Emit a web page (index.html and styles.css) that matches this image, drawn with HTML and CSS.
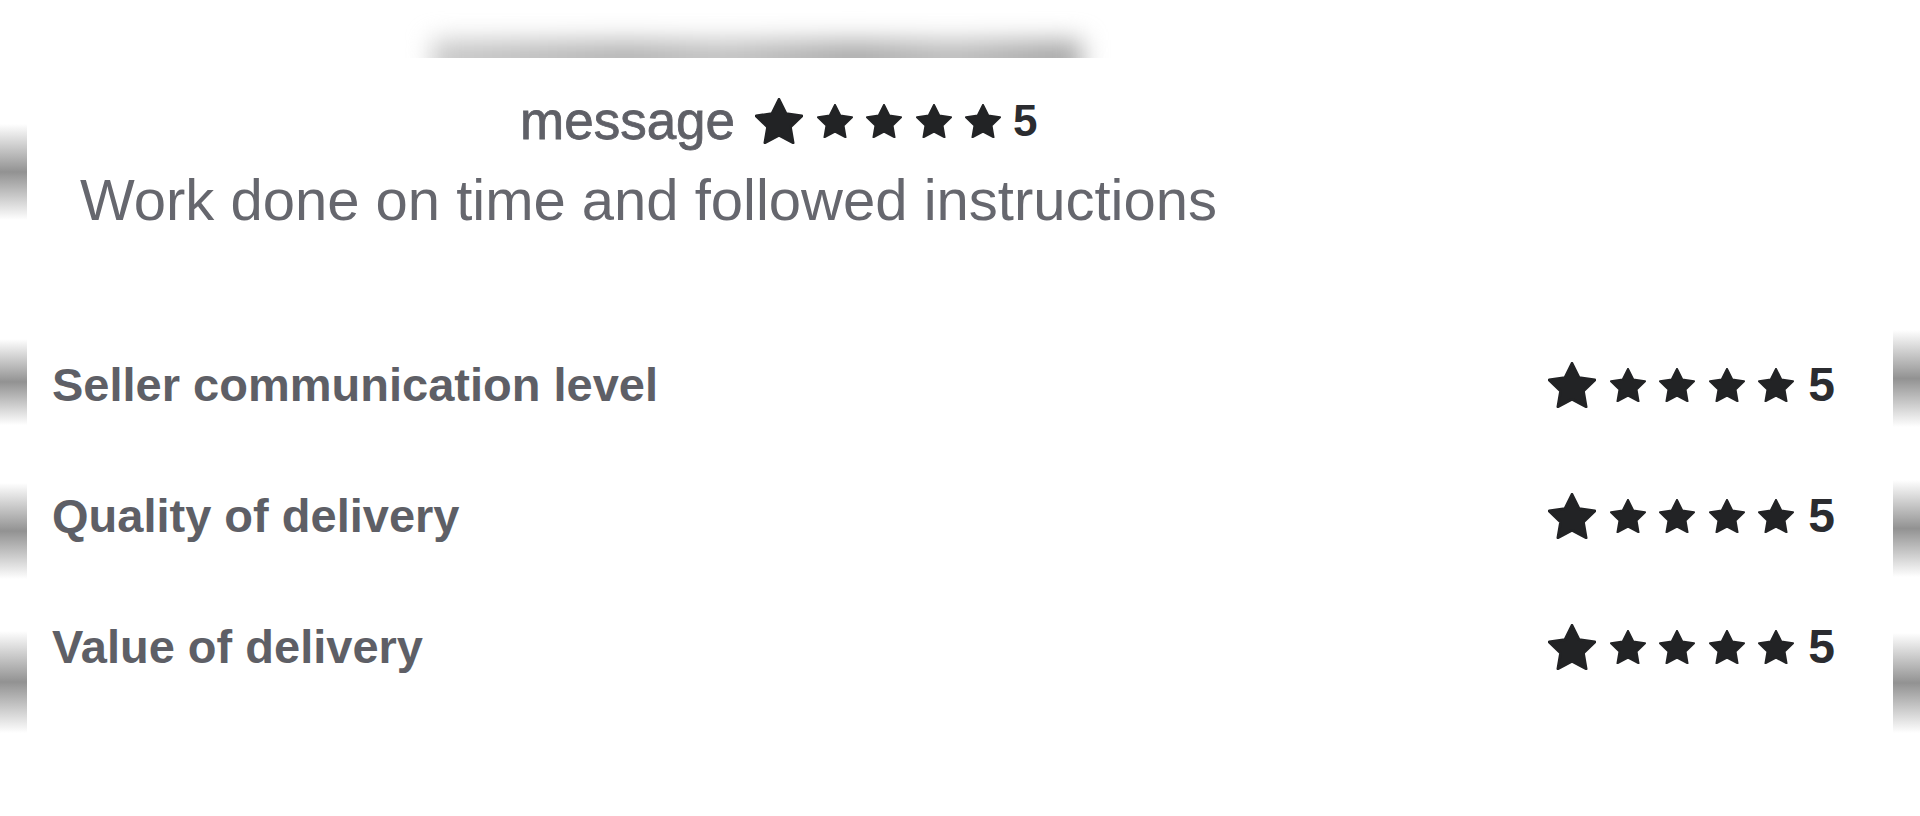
FILE: index.html
```html
<!DOCTYPE html>
<html lang="en">
<head>
  <meta charset="UTF-8" />
  <meta name="viewport" content="width=device-width, initial-scale=1.0"/>
  <title>Review</title>
  <link rel="stylesheet" href="styles.css">
</head>
<body>

  <svg class="sprite" aria-hidden="true">
    <symbol id="star" viewBox="1.5 1.5 21 20">
      <path d="M12 2l3.09 6.26L22 9.27l-5 4.87 1.18 6.88L12 17.77l-6.18 3.25L7 14.14 2 9.27l6.91-1.01L12 2z"/>
    </symbol>
  </svg>

  <div class="frame">
    <div class="gutter">
      <span class="edge e1"></span>
      <span class="edge e2"></span>
      <span class="edge e3"></span>
      <span class="edge e4"></span>
    </div>

    <div class="main">
      <div class="top-fade"><span class="fade-band"></span></div>

      <div class="review-head">
        <span class="msg">message</span>
        <div class="stars">
          <svg class="star big"><use href="#star"/></svg>
          <svg class="star"><use href="#star"/></svg>
          <svg class="star"><use href="#star"/></svg>
          <svg class="star"><use href="#star"/></svg>
          <svg class="star"><use href="#star"/></svg>
        </div>
        <span class="score small">5</span>
      </div>

      <p class="review-text">Work done on time and followed instructions</p>

      <div class="breakdown">
        <div class="row">
          <span class="label">Seller communication level</span>
          <div class="rating">
            <div class="stars">
              <svg class="star big"><use href="#star"/></svg>
              <svg class="star"><use href="#star"/></svg>
              <svg class="star"><use href="#star"/></svg>
              <svg class="star"><use href="#star"/></svg>
              <svg class="star"><use href="#star"/></svg>
            </div>
            <span class="score">5</span>
          </div>
        </div>
        <div class="row">
          <span class="label">Quality of delivery</span>
          <div class="rating">
            <div class="stars">
              <svg class="star big"><use href="#star"/></svg>
              <svg class="star"><use href="#star"/></svg>
              <svg class="star"><use href="#star"/></svg>
              <svg class="star"><use href="#star"/></svg>
              <svg class="star"><use href="#star"/></svg>
            </div>
            <span class="score">5</span>
          </div>
        </div>
        <div class="row">
          <span class="label">Value of delivery</span>
          <div class="rating">
            <div class="stars">
              <svg class="star big"><use href="#star"/></svg>
              <svg class="star"><use href="#star"/></svg>
              <svg class="star"><use href="#star"/></svg>
              <svg class="star"><use href="#star"/></svg>
              <svg class="star"><use href="#star"/></svg>
            </div>
            <span class="score">5</span>
          </div>
        </div>
      </div>
    </div>

    <div class="gutter">
      <span class="edge r1"></span>
      <span class="edge r2"></span>
      <span class="edge r3"></span>
    </div>
  </div>

</body>
</html>
```

FILE: styles.css
```css
body {
  margin: 0;
  background: #fff;
  font-family: "Liberation Sans", Arial, sans-serif;
  overflow: hidden;
}

.sprite {
  display: none;
}

.frame {
  display: flex;
  height: 816px;
}

/* blurry bits of the page behind, cut off by the card */
.gutter {
  width: 27px;
  display: flex;
  flex-direction: column;
}

.edge {
  display: block;
  background: linear-gradient(to bottom, rgba(140,140,140,0) 0%, #929292 50%, rgba(140,140,140,0) 100%);
}

.e1 { margin-top: 124px; height: 96px; }
.e2 { margin-top: 119px; height: 86px; }
.e3 { margin-top: 58px; height: 96px; }
.e4 { margin-top: 52px; height: 102px; }

.r1 { margin-top: 330px; height: 97px; }
.r2 { margin-top: 53px; height: 97px; }
.r3 { margin-top: 56px; height: 100px; }

.main {
  flex: 1;
  display: flex;
  flex-direction: column;
}

.top-fade {
  height: 58px;
  display: flex;
  align-items: flex-end;
  overflow: hidden;
}

.fade-band {
  display: block;
  margin-left: 405px;
  margin-bottom: -22px;
  width: 650px;
  height: 40px;
  background: linear-gradient(to right, #c9c9c9, #b4b4b4 30%, #c2c2c2 45%, #ababab 65%, #bdbdbd 80%, #a9a9a9 95%);
  filter: blur(12px);
}

.review-head {
  margin-top: 36px;
  padding-left: 493px;
  height: 54px;
  display: flex;
  align-items: center;
}

.msg {
  font-size: 53px;
  line-height: 54px;
  color: #5f6067;
  -webkit-text-stroke: 0.8px #5f6067;
  margin-right: 20px;
}

.stars {
  display: flex;
  align-items: center;
  gap: 13.5px;
}

.star {
  width: 36px;
  height: 34px;
  fill: #222325;
  stroke: #222325;
  stroke-width: 1.2;
  stroke-linejoin: round;
}

.star.big {
  width: 48px;
  height: 46px;
}

.score {
  font-size: 48px;
  font-weight: bold;
  line-height: 48px;
  color: #2b2c30;
  margin-left: 14px;
}

.score.small {
  font-size: 44px;
  line-height: 44px;
  margin-left: 12px;
}

.review-text {
  margin: 23px 0 0;
  padding-left: 53px;
  font-size: 58px;
  line-height: 58px;
  color: #66676e;
}

.breakdown {
  margin-top: 90px;
  display: flex;
  flex-direction: column;
}

.row {
  height: 131px;
  display: flex;
  align-items: center;
  justify-content: space-between;
  padding: 0 58px 0 25px;
}

.label {
  font-size: 47px;
  font-weight: bold;
  line-height: 47px;
  color: #5e5f66;
}

.rating {
  display: flex;
  align-items: center;
}
```
